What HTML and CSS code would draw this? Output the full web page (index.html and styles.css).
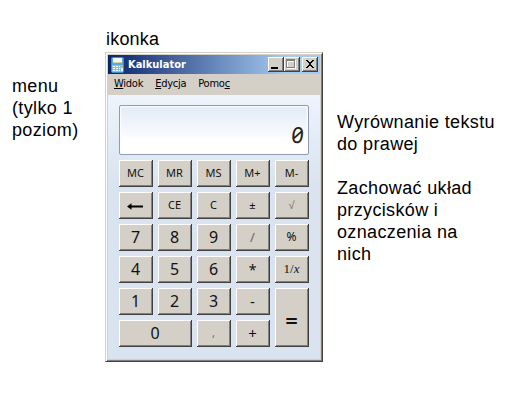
FILE: index.html
```html
<!DOCTYPE html>
<html lang="pl">
<head>
<meta charset="utf-8">
<title>Kalkulator</title>
<link rel="stylesheet" href="styles.css">
</head>
<body>
<main class="sheet">
  <aside class="note note-menu">menu<br>(tylko 1<br>poziom)</aside>
  <section class="center">
    <p class="note note-icon">ikonka</p>
    <div class="window">
      <header class="titlebar">
        <svg class="app-icon" width="14" height="16" viewBox="0 0 14 16">
          <rect x="0.5" y="0.5" width="12" height="15" rx="1" fill="#58a9dc" stroke="#3c8fc8"/>
          <rect x="2" y="1" width="9" height="5" fill="#f4f7e9"/>
          <rect x="2" y="5" width="9" height="1" fill="#d9d2a4"/>
          <rect x="1" y="8" width="11" height="7" fill="#86c3e8"/>
          <path d="M2 9h2v1H2zM5 9h2v1H5zM8 9h1v1H8zM2 11h2v1H2zM5 11h2v1H5zM8 11h1v1H8zM2 13h2v1H2zM5 13h2v1H5zM8 13h1v1H8z" fill="#fff"/>
          <path d="M10 9h2v1h-2z" fill="#f4a34d"/>
          <path d="M10 11h2v3h-2z" fill="#e9f5fc"/>
        </svg>
        <h1 class="title">Kalkulator</h1>
        <div class="controls">
          <span class="ctl"><svg width="16" height="15" shape-rendering="crispEdges"><path d="M3 10h7v2H3z"/></svg></span>
          <span class="ctl"><svg width="16" height="15" shape-rendering="crispEdges"><path d="M3 3h9v9H3zM4 5v6h7V5z" fill="#fff" fill-rule="evenodd"/><path d="M2 2h9v9H2zM3 4v6h7V4z" fill="#808080" fill-rule="evenodd"/></svg></span>
          <span class="ctl close"><svg width="16" height="15" shape-rendering="crispEdges"><path d="M3 3h2v1h1v1h2V4h1V3h2v1h-1v1H9v1H8v2h1v1h1v1h1v1H9v-1H8V9H6v1H5v1H3v-1h1V9h1V8h1V6H5V5H4V4H3z"/></svg></span>
        </div>
      </header>
      <nav class="menubar"><span><u>W</u>idok</span><span><u>E</u>dycja</span><span>Pomo<u>c</u></span></nav>
      <div class="panel">
        <output class="display"><span>0</span></output>
        <div class="keys">
          <button>MC</button><button>MR</button><button>MS</button><button>M+</button><button>M-</button>
          <button aria-label="Backspace"><svg width="17" height="9" viewBox="0 0 17 9"><path d="M0 4.5 4.5 1.2V3.6H16V5.4H4.5V7.8z"/></svg></button><button>CE</button><button>C</button><button>±</button><button class="faint">√</button>
          <button class="num">7</button><button class="num">8</button><button class="num">9</button><button class="faint slash">/</button><button class="percent">%</button>
          <button class="num">4</button><button class="num">5</button><button class="num">6</button><button class="star">*</button><button class="inv">1/<i>x</i></button>
          <button class="num">1</button><button class="num">2</button><button class="num">3</button><button class="op">-</button><button class="equals">=</button>
          <button class="num zero">0</button><button class="faint">,</button><button class="op">+</button>
        </div>
      </div>
    </div>
  </section>
  <aside class="note note-right">
    <p>Wyrównanie tekstu<br>do prawej</p>
    <p>Zachować układ<br>przycisków i<br>oznaczenia na<br>nich</p>
  </aside>
</main>
</body>
</html>
```
FILE: styles.css
```css
* { box-sizing: border-box; }
body { margin: 0; background: #fff; color: #000; }
.sheet {
  display: grid;
  grid-template-columns: 105px 218px 1fr;
  width: 516px;
  height: 407px;
  overflow: hidden;
}
.note { margin: 0; font: 18px/22px "Liberation Sans", Arial, sans-serif; letter-spacing: 0.35px; white-space: nowrap; }
.note p { margin: 0 0 22px; }
.note-menu { padding: 75px 0 0 12px; }
.note-icon { padding: 28px 0 0 1px; height: 52px; letter-spacing: 0.2px; }
.note-right { padding: 111px 0 0 14px; }

.window {
  width: 218px;
  height: 310px;
  padding: 2px;
  background: #d4d0c8;
  border: 1px solid;
  border-color: #d4d0c8 #404040 #404040 #d4d0c8;
  box-shadow: inset 1px 1px #fff, inset -1px -1px #808080;
}
.titlebar {
  display: flex;
  align-items: center;
  height: 19px;
  padding: 0 2px 0 3px;
  background: linear-gradient(90deg, #0a246a, #a6caf0 84%);
}
.title {
  flex: 1;
  margin: 0 0 0 3px;
  color: #fff;
  font: bold 11px/18px "DejaVu Sans Condensed", "DejaVu Sans", sans-serif;
  font-stretch: condensed;
}
.controls { display: flex; }
.ctl {
  width: 16px;
  height: 15px;
  background: #d4d0c8;
  box-shadow: inset -1px -1px #404040, inset 1px 1px #fff, inset -2px -2px #808080;
}
.ctl svg { display: block; }
.close { margin-left: 2px; }
.close svg { padding-left: 1px; }
.menubar {
  display: flex;
  gap: 12px;
  height: 21px;
  padding: 0 6px;
  font: 11px/20px "DejaVu Sans Condensed", "DejaVu Sans", sans-serif;
  font-stretch: condensed;
  letter-spacing: -0.25px;
}
.panel {
  height: 264px;
  padding: 10px 11px;
  background: linear-gradient(#edf4fc, #d9e4f0 90px);
}
.display {
  display: flex;
  justify-content: flex-end;
  width: 190px;
  height: 50px;
  padding: 15px 4px 0 0;
  border: 1px solid #8e9cb4;
  border-radius: 2px;
  background: linear-gradient(#e2ebf9, #f5f8fd 50%, #fff 75%);
  box-shadow: inset 0 0 2px 1px #fff;
  color: #222;
  font: 22px/26px "Noto Sans", sans-serif;
  font-feature-settings: "zero";
}
.display span { transform: skewX(-6deg); }
.keys {
  display: grid;
  grid-template-columns: repeat(5, 34px);
  grid-template-rows: repeat(6, 27px);
  gap: 5px;
  margin-top: 5px;
}
.keys button {
  display: flex;
  align-items: center;
  justify-content: center;
  min-width: 0;
  padding: 0 1px 1px 0;
  border: 0;
  background: #d4d0c8;
  color: #111;
  box-shadow: inset -1px -1px #404040, inset 1px 1px #fff, inset -2px -2px #808080;
  font: 11px/14px "Noto Sans", sans-serif;
}
.keys button svg { margin-top: 3px; }
.keys .num { font-size: 16px; }
.keys .faint { color: #666; }
.keys .slash { font-size: 13px; }
.keys .percent { font-size: 12px; }
.keys .star { font-size: 14px; padding-top: 2px; }
.keys .op { font-size: 15px; }
.keys .inv { font: 13px/14px "Liberation Serif", serif; }
.keys .zero { grid-column: span 2; }
.keys .equals { grid-row: span 2; padding-top: 5px; font-size: 22px; font-weight: 600; }
```
